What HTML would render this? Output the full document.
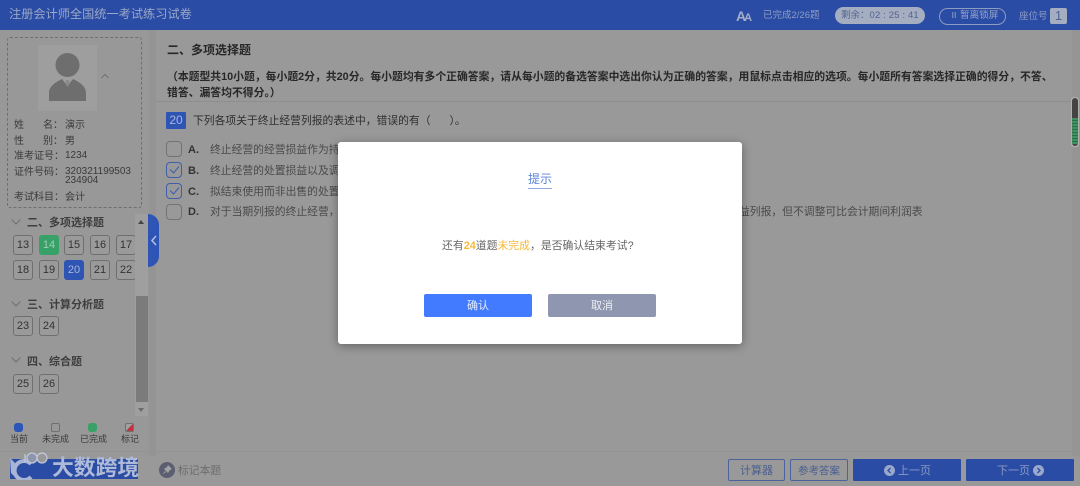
<!DOCTYPE html>
<html lang="zh"><head><meta charset="utf-8"><style>
html,body{margin:0;padding:0}
body{width:1080px;height:486px;overflow:hidden;position:relative;background:#999;font-family:"Liberation Sans","Noto Sans CJK SC",sans-serif;color:#333}
div,svg{position:absolute}
.t{white-space:nowrap;line-height:1}
.n{width:18px;height:18px;border:1px solid #6f6f6f;border-radius:3px;text-align:center;line-height:19px;font-size:11px;color:#333;background:#9a9a9a}
.cb{left:166px;width:14px;height:14px;border:1px solid #737373;border-radius:4px}
.cb.on{border-color:#3e5fa8}
.s{font-size:10px;color:#3a3a3a}
.o{font-size:10.800px;color:#4a4a4a}
.h{left:27px;font-size:11px;font-weight:bold;color:#3e3e3e}
</style></head><body>
<div style="left:0;top:0;width:1080px;height:30px;background:#2b4ca5"></div>
<div class="t" style="left:9px;top:8px;font-size:12.2px;color:#9aa7c8">注册会计师全国统一考试练习试卷</div>
<div class="t" style="left:736px;top:9px;font-size:14px;font-weight:bold;color:#a3aec9;letter-spacing:-2px">A<span style="font-size:11px">A</span></div>
<div class="t" style="left:763px;top:11px;font-size:9.5px;color:#8f9dc2">已完成2/26题</div>
<div style="left:835px;top:7px;width:90px;height:17px;border-radius:9px;background:#a5adc0"></div>
<div class="t" style="left:841px;top:11px;font-size:9.5px;color:#51648f">剩余：<span style="letter-spacing:.15px">02 : 25 : 41</span></div>
<div style="left:939px;top:8px;width:65px;height:15px;border:1px solid #8d9cc3;border-radius:9px"></div>
<div class="t" style="left:950px;top:12px;font-size:8px;color:#a3aec9">Ⅱ</div>
<div class="t" style="left:960px;top:11px;font-size:9.6px;color:#94a2c6">暂离锁屏</div>
<div class="t" style="left:1019px;top:12px;font-size:9.5px;color:#8f9dc2">座位号</div>
<div style="left:1050px;top:8px;width:17px;height:16px;background:#a5adc0;border-radius:2px;text-align:center;font-size:13px;line-height:16px;color:#51648f">1</div>

<div style="left:0;top:30px;width:149px;height:426px;background:#989898"></div>
<div style="left:149px;top:30px;width:7px;height:426px;background:#949494"></div>
<div style="left:156px;top:101px;width:924px;height:1px;background:#8e8e8e"></div>
<div style="left:0;top:451px;width:1080px;height:1px;background:#939393"></div>
<div style="left:1072px;top:30px;width:8px;height:426px;background:#959595"></div>

<div style="left:7px;top:37px;width:133px;height:169px;border:1px dashed #6f6f6f;border-radius:3px"></div>
<div style="left:38px;top:45px;width:59px;height:66px;background:#9e9e9e"></div>
<svg style="left:38px;top:46px" width="59" height="65" viewBox="0 0 59 65"><circle cx="29.500" cy="19" r="12" fill="#6e6e6e"/><path d="M11 55V47C11 40 18 36 24 33L29.500 40L35 33C41 36 48 40 48 47V55Z" fill="#6e6e6e"/><path d="M28 34H31L31.500 38L29.500 41L27.500 38Z" fill="#8a8a8a"/></svg>
<svg style="left:100px;top:73px" width="10" height="7" viewBox="0 0 10 7"><path d="M1.500 5L5 1.500L8.500 5" fill="none" stroke="#707070"/></svg>
<div class="t s" style="left:14px;top:121px">姓</div><div class="t s" style="left:43px;top:121px">名：</div><div class="t s" style="left:65px;top:121px">演示</div>
<div class="t s" style="left:14px;top:137px">性</div><div class="t s" style="left:43px;top:137px">别：</div><div class="t s" style="left:65px;top:137px">男</div>
<div class="t s" style="left:14px;top:152px">准考证号：</div><div class="t s" style="left:65px;top:151px">1234</div>
<div class="t s" style="left:14px;top:168px">证件号码：</div><div class="t s" style="left:65px;top:167px">320321199503</div><div class="t s" style="left:65px;top:176px">234904</div>
<div class="t s" style="left:14px;top:193px">考试科目：</div><div class="t s" style="left:65px;top:193px">会计</div>

<svg style="left:10px;top:218px" width="12" height="8" viewBox="0 0 12 8"><path d="M1.500 1.500L6 6L10.500 1.500" fill="none" stroke="#707070"/></svg>
<div class="t h" style="top:218px">二、多项选择题</div>
<svg style="left:10px;top:300px" width="12" height="8" viewBox="0 0 12 8"><path d="M1.500 1.500L6 6L10.500 1.500" fill="none" stroke="#707070"/></svg>
<div class="t h" style="top:300px">三、计算分析题</div>
<svg style="left:10px;top:356px" width="12" height="8" viewBox="0 0 12 8"><path d="M1.500 1.500L6 6L10.500 1.500" fill="none" stroke="#707070"/></svg>
<div class="t h" style="top:357px">四、综合题</div>

<div class="n" style="left:13px;top:235px">13</div>
<div class="n" style="left:39px;top:235px;background:#37a168;border-color:#37a168;color:#9fcfb4">14</div>
<div class="n" style="left:64px;top:235px">15</div>
<div class="n" style="left:90px;top:235px">16</div>
<div class="n" style="left:116px;top:235px">17</div>
<div class="n" style="left:13px;top:260px">18</div>
<div class="n" style="left:39px;top:260px">19</div>
<div class="n" style="left:64px;top:260px;background:#2f55b4;border-color:#2f55b4;color:#a6b5dc">20</div>
<div class="n" style="left:90px;top:260px">21</div>
<div class="n" style="left:116px;top:260px">22</div>
<div class="n" style="left:13px;top:316px">23</div>
<div class="n" style="left:39px;top:316px">24</div>
<div class="n" style="left:13px;top:374px">25</div>
<div class="n" style="left:39px;top:374px">26</div>

<div style="left:135px;top:214px;width:13px;height:202px;background:#9f9f9f"></div>
<div style="left:135.500px;top:296px;width:12px;height:106px;background:#7b7b7b"></div>
<div style="left:138px;top:220px;width:0;height:0;border:3px solid transparent;border-top:0;border-bottom:4px solid #444"></div>
<div style="left:138px;top:408px;width:0;height:0;border:3px solid transparent;border-bottom:0;border-top:4px solid #6a6a6a"></div>
<div style="left:148px;top:214px;width:11px;height:53px;background:#2e55b6;border-radius:0 11px 11px 0"></div>
<svg style="left:150px;top:235px" width="8" height="11" viewBox="0 0 8 11"><path d="M6 1L2 5.500L6 10" fill="none" stroke="#b4c0de" stroke-width="1.500"/></svg>

<div style="left:14px;top:423px;width:9px;height:9px;border-radius:3px;background:#2b55b8"></div>
<div style="left:51px;top:423px;width:7px;height:7px;border:1px solid #707070;border-radius:2px"></div>
<div style="left:88px;top:423px;width:9px;height:9px;border-radius:3px;background:#37a168"></div>
<div style="left:125px;top:423px;width:7px;height:7px;border:1px solid #707070;border-radius:2px;background:linear-gradient(135deg,#a0a0a0 50%,#c2323e 50%)"></div>
<div class="t" style="left:10px;top:435px;font-size:9px;color:#3a3a3a">当前</div>
<div class="t" style="left:42px;top:435px;font-size:9px;color:#3a3a3a">未完成</div>
<div class="t" style="left:80px;top:435px;font-size:9px;color:#3a3a3a">已完成</div>
<div class="t" style="left:121px;top:435px;font-size:9px;color:#3a3a3a">标记</div>

<div style="left:10px;top:459px;width:128px;height:20px;background:#2b4ca5"></div>
<svg style="left:8px;top:450px" width="42" height="30" viewBox="0 0 42 30"><path d="M2 8L7 13V27L3 23Z" fill="#a9b5d4"/><path d="M23 14A9.500 9.500 0 1 0 23 27" fill="none" stroke="#a9b5d4" stroke-width="4"/><path d="M17 4V12" stroke="#c2c8d8" stroke-width="1.300"/><circle cx="24" cy="8" r="5" fill="#8e96ad" stroke="#c2c8d8" stroke-width="1.300"/><circle cx="34" cy="8" r="5" fill="#999" stroke="#c2c8d8" stroke-width="1.300"/></svg>
<div class="t" style="left:52px;top:457px;font-size:21.800px;font-weight:bold;color:#aebad8">大数跨境</div>
<div style="left:159px;top:462px;width:16px;height:16px;border-radius:50%;background:#5a5e70"></div>
<svg style="left:159px;top:462px" width="16" height="16" viewBox="0 0 16 16"><path d="M9 3L13 7L11 8L9 11L5 7L8 5ZM6 9L3.500 12.500L7 10Z" fill="#a2a2a2"/></svg>
<div class="t" style="left:178px;top:466px;font-size:10.800px;color:#6d6d6d">标记本题</div>

<div class="t" style="left:167px;top:44px;font-size:12px;font-weight:bold;color:#272727">二、多项选择题</div>
<div class="t" style="left:167px;top:72px;font-size:10.830px;font-weight:bold;color:#272727">（本题型共10小题，每小题2分，共20分。每小题均有多个正确答案，请从每小题的备选答案中选出你认为正确的答案，用鼠标点击相应的选项。每小题所有答案选择正确的得分，不答、</div>
<div class="t" style="left:167px;top:88px;font-size:10.830px;font-weight:bold;color:#272727">错答、漏答均不得分。）</div>

<div style="left:166px;top:112px;width:20px;height:17px;background:#2f55b4;border-radius:1px;text-align:center;line-height:17px;font-size:12px;color:#a6b5dc">20</div>
<div class="t" style="left:193px;top:116px;font-size:10.800px;color:#2e2e2e">下列各项关于终止经营列报的表述中，错误的有（<span style="display:inline-block;width:19px"></span>）。</div>

<div class="cb" style="top:141px"></div>
<div class="cb on" style="top:162px"></div>
<div class="cb on" style="top:183px"></div>
<div class="cb" style="top:204px"></div>
<svg style="left:169px;top:165px" width="11" height="10" viewBox="0 0 11 10"><path d="M1 4.500L4.500 8L10 1.500" fill="none" stroke="#3e5fa8" stroke-width="1.100"/></svg>
<svg style="left:169px;top:186px" width="11" height="10" viewBox="0 0 11 10"><path d="M1 4.500L4.500 8L10 1.500" fill="none" stroke="#3e5fa8" stroke-width="1.100"/></svg>
<div class="t" style="left:188px;top:145px;font-size:11px;font-weight:bold;color:#333">A.</div>
<div class="t" style="left:188px;top:166px;font-size:11px;font-weight:bold;color:#333">B.</div>
<div class="t" style="left:188px;top:187px;font-size:11px;font-weight:bold;color:#333">C.</div>
<div class="t" style="left:188px;top:207px;font-size:11px;font-weight:bold;color:#333">D.</div>
<div class="t o" style="left:210px;top:145px">终止经营的经营损益作为持</div>
<div class="t o" style="left:210px;top:166px">终止经营的处置损益以及调</div>
<div class="t o" style="left:210px;top:187px">拟结束使用而非出售的处置</div>
<div class="t o" style="left:210px;top:207px">对于当期列报的终止经营，</div>
<div class="t o" style="left:739px;top:207px">益列报，但不调整可比会计期间利润表</div>

<div style="left:1071px;top:97px;width:8px;height:50px;background:#b0b0b0;border-radius:3px"></div>
<div style="left:1072px;top:98px;width:6px;height:48px;background:#444;border-radius:3px"></div>
<div style="left:1072px;top:118px;width:6px;height:26px;background:repeating-linear-gradient(#3f9160 0 2px,#2f6e49 2px 3px)"></div>

<div style="left:728px;top:459px;width:55px;height:20px;border:1px solid #4b629c;border-radius:2px;text-align:center;line-height:22px;font-size:11px;color:#4b5f90">计算器</div>
<div style="left:790px;top:459px;width:56px;height:20px;border:1px solid #4b629c;border-radius:2px;text-align:center;line-height:22px;font-size:10.500px;color:#4b5f90">参考答案</div>
<div style="left:853px;top:459px;width:108px;height:22px;background:#2b4ca5;border-radius:1px"></div>
<div style="left:966px;top:459px;width:108px;height:22px;background:#2b4ca5;border-radius:1px"></div>
<div style="left:884px;top:465px;width:11px;height:11px;border-radius:50%;background:#9aa8cb"></div>
<svg style="left:884px;top:465px" width="11" height="11" viewBox="0 0 11 11"><path d="M6.500 3L4 5.500L6.500 8" fill="none" stroke="#2b4ca5" stroke-width="1.300"/></svg>
<div class="t" style="left:898px;top:466px;font-size:11px;color:#8999c2">上一页</div>
<div class="t" style="left:997px;top:466px;font-size:11px;color:#8999c2">下一页</div>
<div style="left:1033px;top:465px;width:11px;height:11px;border-radius:50%;background:#9aa8cb"></div>
<svg style="left:1033px;top:465px" width="11" height="11" viewBox="0 0 11 11"><path d="M4.500 3L7 5.500L4.500 8" fill="none" stroke="#2b4ca5" stroke-width="1.300"/></svg>

<div style="left:338px;top:142px;width:404px;height:202px;background:#fff;border-radius:3px;box-shadow:0 2px 10px rgba(0,0,0,.35)"></div>
<div class="t" style="left:528px;top:173px;font-size:12px;color:#5b83d9">提示</div>
<div style="left:528px;top:188px;width:24px;height:1px;background:#8fa8e0"></div>
<div class="t" style="left:442px;top:241px;font-size:10.850px;color:#666">还有<span style="color:#f5b93a;font-weight:bold">24</span>道题<span style="color:#f5b93a">未完成</span>，是否确认结束考试?</div>
<div style="left:424px;top:294px;width:108px;height:23px;background:#427bff;border-radius:2px;text-align:center;line-height:24px;font-size:11px;color:#e6eeff">确认</div>
<div style="left:548px;top:294px;width:108px;height:23px;background:#8f96b0;border-radius:2px;text-align:center;line-height:24px;font-size:11px;color:#eceef3">取消</div>
</body></html>
